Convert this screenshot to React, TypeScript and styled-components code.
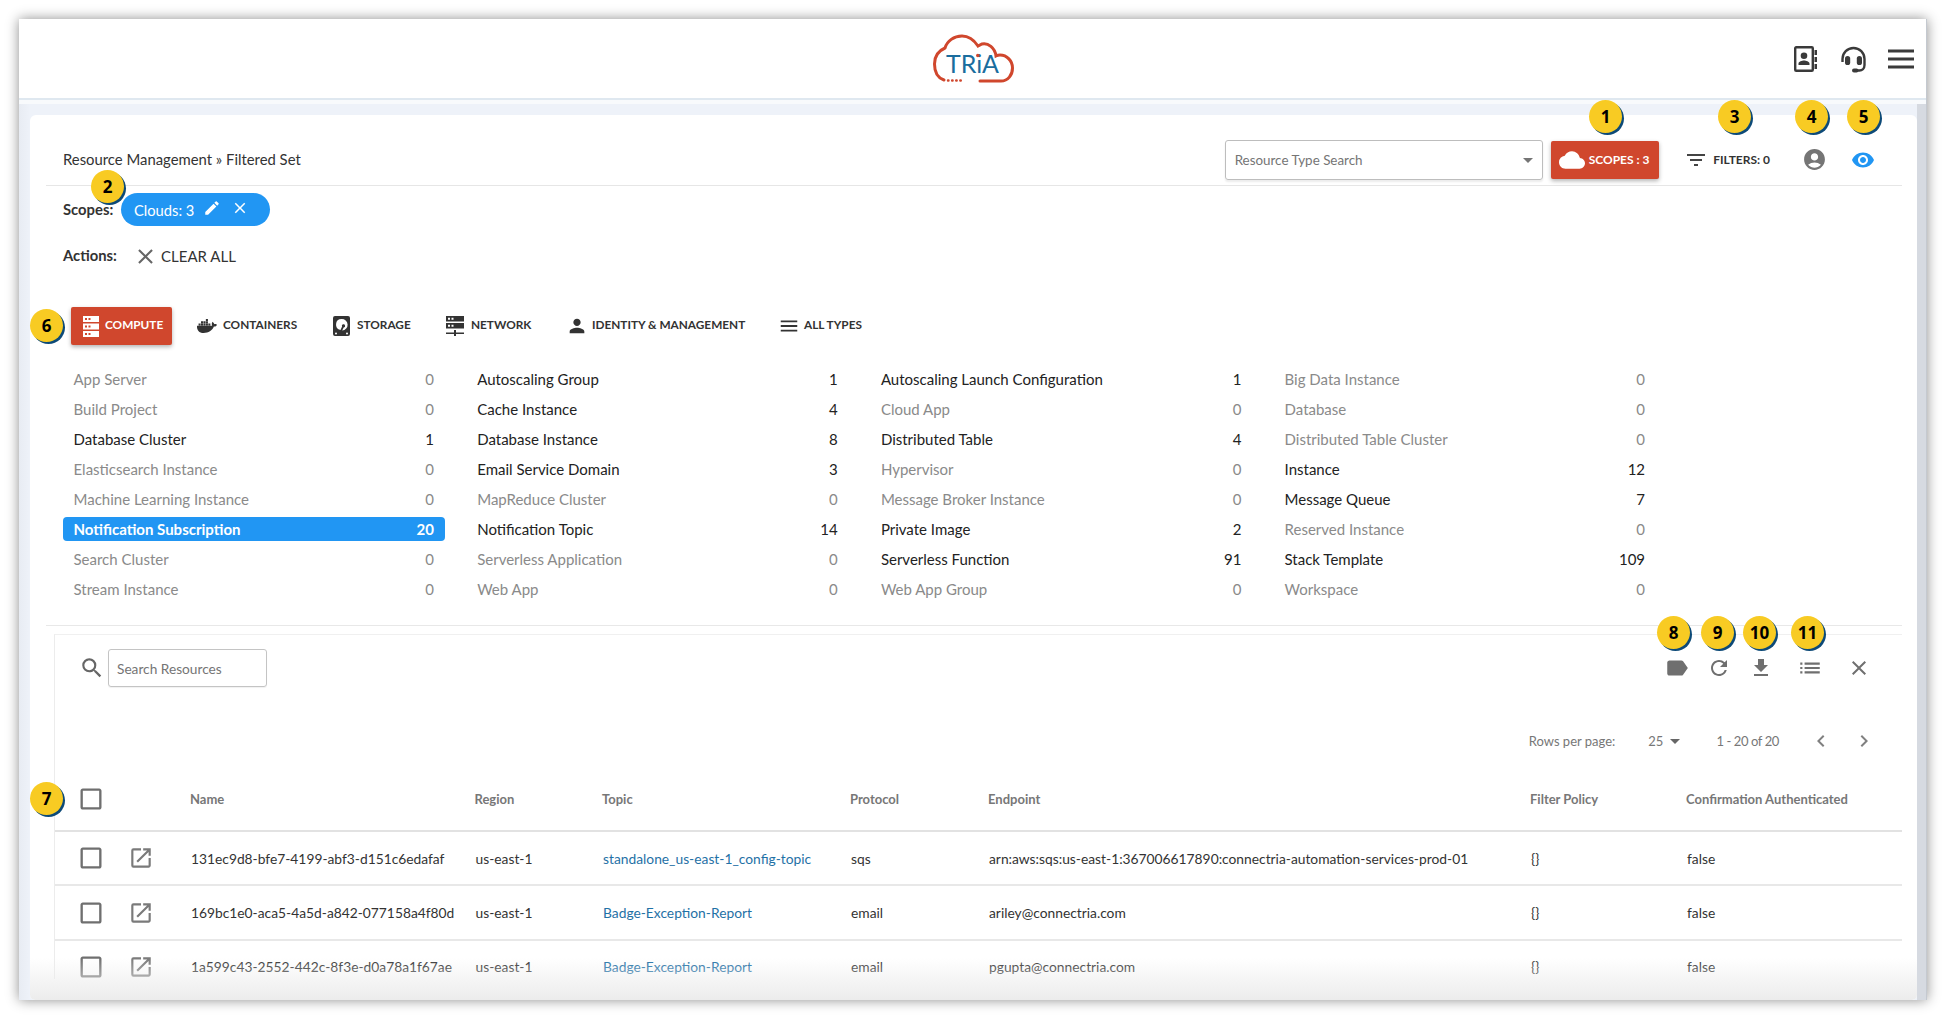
import React from "react";
import styled, { createGlobalStyle } from "styled-components";
import {
  MdEdit, MdClose, MdPerson, MdFilterList, MdAccountCircle, MdVisibility, MdCloud,
  MdLabel, MdRefresh, MdFileDownload, MdList, MdCheckBoxOutlineBlank, MdOpenInNew, MdSearch,
  MdChevronLeft, MdChevronRight, MdArrowDropDown, MdMenu,
} from "react-icons/md";
import { FaDocker } from "react-icons/fa";

const Global = createGlobalStyle`
  html, body { margin: 0; padding: 0; background: #fff; }
  body { font-family: Lato, "Liberation Sans", sans-serif; color: #333; }
  * { box-sizing: border-box; }
`;

const Page = styled.div`
  width: 1942px; height: 1029px; padding: 19px 15px 29px 19px; overflow: hidden; display: flex;
`;
const Window = styled.div`
  flex: 1; display: flex; flex-direction: column; background: #eef2f9;
  box-shadow: 0 0 12px rgba(0, 0, 0, 0.45); overflow: hidden;
  border-right: 1px solid #c4c9d0;
`;
const Header = styled.header`
  height: 85px; flex: none; padding: 0 2px 5px 0; background: linear-gradient(#fff 80px, #f8fafc 80px);
  position: relative; display: flex; align-items: center; justify-content: flex-end; gap: 0;
  &::after { content: ""; position: absolute; left: 0; right: 0; top: 79px; height: 2px; background: #dfe8f0; }
`;
const LogoSlot = styled.div`
  position: absolute; left: 914px; top: 15px; width: 82px; height: 50px;
`;
const HeaderIcon = styled.div<{ $w: number }>`
  width: ${(p) => p.$w}px; display: flex; justify-content: center; align-items: center; color: #3a3a3a;
`;
const Gutter = styled.div`
  flex: 1; display: flex; min-height: 0; padding: 11px 9px 0 11px;
  background: linear-gradient(90deg, #e8ecf3 0, #eef2f9 11px, #eef2f9 calc(100% - 9px), #d6dae1 calc(100% - 9px));
`;
const Card = styled.main`
  flex: 1; min-width: 0; background: #fff; border-radius: 6px 6px 5px 5px; position: relative;
  padding: 0 15px 21px 16px; display: flex; flex-direction: column; overflow: hidden;
  &::after {
    content: ""; position: absolute; left: 0; right: 0; bottom: 0; height: 42px; pointer-events: none;
    background: linear-gradient(rgba(240, 240, 240, 0), #ececec);
  }
`;
const TopBar = styled.div`
  height: 71px; flex: none; padding: 19px 27px 0 17px; border-bottom: 1px solid #e6e6e6;
  display: flex; align-items: center;
`;
const Crumb = styled.div`
  font-size: 14.85px; color: #333; flex: 1; padding-bottom: 2px;
`;
const TypeSelect = styled.div`
  width: 318px; height: 40px; border: 1.5px solid #bdbdbd; border-radius: 3px; padding: 0 2px 0 9px;
  display: flex; align-items: center; justify-content: space-between; font-size: 13.4px; color: #757575;
  box-shadow: 0 2px 2px rgba(0, 0, 0, 0.08);
`;
const ScopesButton = styled.button`
  margin-left: 8px; width: 108px; height: 38px; background: #d0472d; border: 0; border-radius: 2px; color: #fff;
  font: 700 12px Lato, sans-serif; display: flex; align-items: center; gap: 4px; padding: 0 0 0 8px;
  box-shadow: 0 2px 4px rgba(0, 0, 0, 0.3);
`;
const FiltersGroup = styled.div`
  margin-left: 25.5px; display: flex; align-items: center; gap: 5px; font: 700 12px Lato, sans-serif; color: #333;
`;
const PlainIcon = styled.div<{ $ml: number; $c: string }>`
  margin-left: ${(p) => p.$ml}px; color: ${(p) => p.$c}; display: flex;
`;
const InfoRow = styled.div<{ $mt: number }>`
  margin-top: ${(p) => p.$mt}px; padding-left: 17px; display: flex; align-items: center; height: 33px; flex: none;
`;
const InfoLabel = styled.span`
  font-size: 14.8px; font-weight: 700; color: #333; width: 58px; padding-bottom: 2px;
`;
const Chip = styled.div`
  width: 149px; height: 33px; border-radius: 17px; background: #2196f3; color: #fff; font-size: 14.7px;
  display: flex; align-items: center; padding-left: 13px;
`;
const ChipIcon = styled.span<{ $ml: number }>`
  margin-left: ${(p) => p.$ml}px; display: flex; position: relative; top: -2px;
`;
const ClearAll = styled.div`
  margin-left: 11.5px; display: flex; align-items: center; gap: 3.5px; font-size: 15px; color: #333;
`;
const Tabs = styled.nav`
  margin-top: 34.5px; padding-left: 25px; display: flex; align-items: center; height: 38px; flex: none;
`;
const Tab = styled.div<{ $active?: boolean; $w: number; $ml?: number; $gap: number }>`
  width: ${(p) => p.$w}px; height: 38px; flex: none; display: flex; align-items: center; gap: ${(p) => p.$gap}px;
  margin-left: ${(p) => p.$ml ?? 0}px;
  padding-left: ${(p) => (p.$active ? 11.5 : 0)}px; font-size: 11.8px; font-weight: 700;
  color: ${(p) => (p.$active ? "#fff" : "#333")};
  background: ${(p) => (p.$active ? "#d0472d" : "transparent")};
  border-radius: 2px; box-shadow: ${(p) => (p.$active ? "0 2px 4px rgba(0,0,0,.3)" : "none")};
  & > span { padding-bottom: 3px; }
`;
const TypeGrid = styled.section`
  margin-top: 22px; padding-left: 17px; display: grid; grid-template-columns: repeat(4, 382px);
  column-gap: 21.7px; row-gap: 6px; grid-auto-rows: 24px; flex: none;
`;
const TypeRow = styled.div<{ $on: boolean; $selected: boolean }>`
  display: flex; justify-content: space-between; align-items: center; padding: 0 11px 0 10.5px; font-size: 15px;
  border-radius: 4px; font-weight: ${(p) => (p.$selected ? 700 : 400)};
  color: ${(p) => (p.$selected ? "#fff" : p.$on ? "#222" : "#8a8a8a")};
  background: ${(p) => (p.$selected ? "#2196f3" : "transparent")};
`;
const Divider = styled.hr`
  margin: 24px 0 0; border: 0; border-top: 1px solid #e8e8e8; flex: none; width: 100%;
`;
const Panel = styled.section`
  margin: 8px 0 0 8px; flex: 1; min-height: 0; overflow: hidden; border-left: 1px solid #ececec; border-top: 1px solid #f0f0f0;
  display: flex; flex-direction: column;
`;
const Toolbar = styled.div`
  margin-top: 14px; height: 38px; flex: none; display: flex; align-items: center; padding: 0 19px 0 24px;
`;
const SearchIcon = styled.div`
  color: #666; display: flex; margin-right: 3px;
`;
const SearchBox = styled.div`
  width: 159px; height: 38px; border: 1px solid #c4c4c4; border-radius: 3px; font-size: 13.7px; color: #757575;
  display: flex; align-items: center; padding-left: 8px; box-shadow: 0 1px 1px rgba(0,0,0,.06);
`;
const ToolIcons = styled.div`
  margin-left: auto; display: flex; align-items: center; color: #6f6f6f;
`;
const ToolCell = styled.div<{ $w: number }>`
  width: ${(p) => p.$w}px; display: flex; justify-content: center;
`;
const Pager = styled.div`
  margin-top: 33px; height: 42px; flex: none; display: flex; align-items: center; justify-content: flex-end;
  padding-right: 26px; font-size: 13px; color: #777;
`;
const PagerPart = styled.span<{ $ml: number; $tight?: boolean }>`
  margin-left: ${(p) => p.$ml}px; display: flex; align-items: center;
  letter-spacing: ${(p) => (p.$tight ? "-0.4px" : "normal")};
`;
const COLS = "71px 64px 284.5px 127.5px 248px 138px 542px 156px 1fr";
const HeadRow = styled.div`
  height: 70px; flex: none; display: grid; grid-template-columns: ${COLS}; align-items: center;
  border-bottom: 2px solid #e2e2e2; font-size: 13px; font-weight: 700; color: #777; padding-top: 5px;
`;
const BodyRow = styled.div`
  height: 54.4px; flex: none; display: grid; grid-template-columns: ${COLS}; align-items: center;
  border-bottom: 2px solid #e8e8e8; font-size: 13.8px; color: #333;
`;
const Check = styled.div`
  color: #6f6f6f; display: flex; justify-content: center;
`;
const OpenIcon = styled.div`
  color: #7a7a7a; display: flex; padding-left: 2px;
`;
const Cell = styled.div`
  padding-left: 1px; white-space: nowrap;
`;
const LinkCell = styled(Cell)`
  color: #1f71a6;
`;
const Badge = styled.div<{ $x: number; $y: number }>`
  position: absolute; left: ${(p) => p.$x - 17}px; top: ${(p) => p.$y - 17}px; width: 33px; height: 33px; border-radius: 50%;
  background: #f8cb23; box-shadow: 2px 2px 0 #0d4a78; color: #000; font: 700 17px/33px "Open Sans", Lato, sans-serif;
  text-align: center; z-index: 5;
`;

const ServerStack = () => (
  <svg width="16" height="21" viewBox="0 0 16 21"><path fill="#fff" fillRule="evenodd" d="M0 0h16v6H0ZM2 2v2h2V2Zm3.500 0v2h2V2ZM0 7.500h16v6H0Zm2 2v2h2v-2Zm3.500 0v2h2v-2ZM0 15h16v6H0Zm2 2v2h2v-2Zm3.500 0v2h2v-2Z"/></svg>
);
const HardDisk = () => (
  <svg width="17" height="20" viewBox="0 0 17 20"><path fill="#333" fillRule="evenodd" d="M2 0h13a2 2 0 0 1 2 2v16a2 2 0 0 1-2 2H2a2 2 0 0 1-2-2V2a2 2 0 0 1 2-2Zm6.500 3a5.500 5.500 0 0 0-1 10.900l1.600-3.300a1.600 1.600 0 1 1 1.600.8l-1.500 3.100A5.500 5.500 0 0 0 8.500 3ZM3 16.500a1 1 0 1 0 0 2 1 1 0 0 0 0-2Zm11 0a1 1 0 1 0 0 2 1 1 0 0 0 0-2Z"/></svg>
);
const ServerNet = () => (
  <svg width="18" height="20" viewBox="0 0 18 20"><path fill="#333" fillRule="evenodd" d="M0 0h18v5.500H0ZM2 1.800v2h2v-2Zm3.500 0v2h2v-2ZM0 7h18v5.500H0Zm2 1.800v2h2v-2Zm3.500 0v2h2v-2ZM8 14h2v2.500h8V18h-8v2H8v-2H0v-1.500h8Z"/></svg>
);
const ContactBook = () => (
  <svg width="23" height="26" viewBox="0 0 23 26"><path fill="none" stroke="#3a3a3a" strokeWidth="2.400" d="M2.200 1.200h15.600a1 1 0 0 1 1 1v21.600a1 1 0 0 1-1 1H2.200a1 1 0 0 1-1-1V2.200a1 1 0 0 1 1-1Z"/><path fill="#3a3a3a" d="M20.500 4H23v5h-2.500Zm0 7H23v5h-2.500Zm0 7H23v5h-2.500ZM10 6.500a3.300 3.300 0 1 1 0 6.600 3.300 3.300 0 0 1 0-6.600ZM4.500 19v-1.600c0-2 3.600-3 5.500-3s5.500 1 5.500 3V19Z"/></svg>
);
const Headset = () => (
  <svg width="27" height="27" viewBox="0 0 27 27"><path fill="none" stroke="#3a3a3a" strokeWidth="2.400" d="M2.500 16V13a11 11 0 0 1 22 0v6c0 3.500-2.500 5.500-5 5.500H17"/><rect x="5" y="10" width="5.200" height="9" rx="2.600" fill="#3a3a3a"/><rect x="16.800" y="10" width="5.200" height="9" rx="2.600" fill="#3a3a3a"/><rect x="12" y="22.500" width="6.500" height="4" rx="2" fill="#3a3a3a"/></svg>
);
const Burger = () => (
  <svg width="26" height="20" viewBox="0 0 26 20"><path stroke="#3a3a3a" strokeWidth="2.800" d="M0 2h26M0 10h26M0 18h26"/></svg>
);
const Logo = () => (
  <svg width="82" height="50" viewBox="0 0 82 50">
    <path fill="none" stroke="#d0472d" strokeWidth="3" strokeLinecap="round" d="M47 47H68C75 47 79.500 41 79.500 34C79.500 27 74 21 67 21C65 21 64 21.500 63 22C62 14 55 8.500 49 10L45 12C41 6 36 2 29 2C21 2 14 7 12 14C5 17 1.500 23 1.500 30C1.500 38 5 44 11 46"/>
    <path stroke="#d0472d" strokeWidth="2.400" strokeLinecap="round" strokeDasharray="0.5 3.600" d="M15 46.500H29"/>
    <text x="13" y="39" fontFamily="Lato, sans-serif" fontSize="25.500" fill="#1a6d9e" textLength="53" lengthAdjust="spacingAndGlyphs">TRiA</text>
    <circle cx="44.800" cy="21.500" r="1.800" fill="#d0472d"/>
  </svg>
);

const TYPES: [string, number][] = [
  ["App Server", 0], ["Autoscaling Group", 1], ["Autoscaling Launch Configuration", 1], ["Big Data Instance", 0],
  ["Build Project", 0], ["Cache Instance", 4], ["Cloud App", 0], ["Database", 0],
  ["Database Cluster", 1], ["Database Instance", 8], ["Distributed Table", 4], ["Distributed Table Cluster", 0],
  ["Elasticsearch Instance", 0], ["Email Service Domain", 3], ["Hypervisor", 0], ["Instance", 12],
  ["Machine Learning Instance", 0], ["MapReduce Cluster", 0], ["Message Broker Instance", 0], ["Message Queue", 7],
  ["Notification Subscription", 20], ["Notification Topic", 14], ["Private Image", 2], ["Reserved Instance", 0],
  ["Search Cluster", 0], ["Serverless Application", 0], ["Serverless Function", 91], ["Stack Template", 109],
  ["Stream Instance", 0], ["Web App", 0], ["Web App Group", 0], ["Workspace", 0],
];
const ROWS = [
  ["131ec9d8-bfe7-4199-abf3-d151c6edafaf", "standalone_us-east-1_config-topic", "sqs", "arn:aws:sqs:us-east-1:367006617890:connectria-automation-services-prod-01"],
  ["169bc1e0-aca5-4a5d-a842-077158a4f80d", "Badge-Exception-Report", "email", "ariley@connectria.com"],
  ["1a599c43-2552-442c-8f3e-d0a78a1f67ae", "Badge-Exception-Report", "email", "pgupta@connectria.com"],
];
const BADGES: [string, number, number][] = [
  ["1", 1606, 117], ["2", 108, 187], ["3", 1735, 117], ["4", 1812, 117], ["5", 1864, 117], ["6", 47, 326],
  ["7", 47, 799], ["8", 1674, 633], ["9", 1718, 633], ["10", 1760, 633], ["11", 1808, 633],
];

export default function App() {
  return (
    <>
      <Global />
      <Page>
        <Window>
          <Header>
            <LogoSlot><Logo /></LogoSlot>
            <HeaderIcon $w={48}><ContactBook /></HeaderIcon>
            <HeaderIcon $w={49}><Headset /></HeaderIcon>
            <HeaderIcon $w={46}><Burger /></HeaderIcon>
          </Header>
          <Gutter>
            <Card>
              <TopBar>
                <Crumb>Resource Management » Filtered Set</Crumb>
                <TypeSelect>Resource Type Search<MdArrowDropDown size={24} color="#757575" /></TypeSelect>
                <ScopesButton><MdCloud size={26} />SCOPES : 3</ScopesButton>
                <FiltersGroup><MdFilterList size={24} color="#444" />FILTERS: 0</FiltersGroup>
                <PlainIcon $ml={32} $c="#757575"><MdAccountCircle size={25} /></PlainIcon>
                <PlainIcon $ml={24} $c="#2196f3"><MdVisibility size={24} /></PlainIcon>
              </TopBar>
              <InfoRow $mt={7}>
                <InfoLabel>Scopes:</InfoLabel>
                <Chip>Clouds: 3
                  <ChipIcon $ml={9}><MdEdit size={18} /></ChipIcon>
                  <ChipIcon $ml={10}><MdClose size={18} /></ChipIcon>
                </Chip>
              </InfoRow>
              <InfoRow $mt={13.5}>
                <InfoLabel>Actions:</InfoLabel>
                <ClearAll><MdClose size={25} color="#666" />CLEAR ALL</ClearAll>
              </InfoRow>
              <Tabs>
                <Tab $active $w={101} $gap={6.5}><ServerStack /><span>COMPUTE</span></Tab>
                <Tab $w={136} $ml={25} $gap={6}><FaDocker size={20} /><span>CONTAINERS</span></Tab>
                <Tab $w={113} $gap={7}><HardDisk /><span>STORAGE</span></Tab>
                <Tab $w={120} $gap={7}><ServerNet /><span>NETWORK</span></Tab>
                <Tab $w={212} $gap={4}><MdPerson size={22} /><span>IDENTITY &amp; MANAGEMENT</span></Tab>
                <Tab $w={90} $gap={4}><MdMenu size={22} /><span>ALL TYPES</span></Tab>
              </Tabs>
              <TypeGrid>
                {TYPES.map(([n, c]) => (
                  <TypeRow key={n} $on={c > 0} $selected={n === "Notification Subscription"}>
                    <span>{n}</span><span>{c}</span>
                  </TypeRow>
                ))}
              </TypeGrid>
              <Divider />
              <Panel>
                <Toolbar>
                  <SearchIcon><MdSearch size={26} /></SearchIcon>
                  <SearchBox>Search Resources</SearchBox>
                  <ToolIcons>
                    <ToolCell $w={49.6}><MdLabel size={26} /></ToolCell>
                    <ToolCell $w={34.9}><MdRefresh size={24} /></ToolCell>
                    <ToolCell $w={48.6}><MdFileDownload size={24} /></ToolCell>
                    <ToolCell $w={49.7}><MdList size={26} /></ToolCell>
                    <ToolCell $w={48}><MdClose size={24} /></ToolCell>
                  </ToolIcons>
                </Toolbar>
                <Pager>
                  <span>Rows per page:</span>
                  <PagerPart $ml={33}>25<MdArrowDropDown size={24} color="#666" /></PagerPart>
                  <PagerPart $ml={29} $tight>1 - 20 of 20</PagerPart>
                  <PagerPart $ml={30}><MdChevronLeft size={24} color="#808080" /></PagerPart>
                  <PagerPart $ml={19}><MdChevronRight size={24} color="#808080" /></PagerPart>
                </Pager>
                <HeadRow>
                  <Check><MdCheckBoxOutlineBlank size={28} /></Check>
                  <span />
                  <span>Name</span><span>Region</span><span>Topic</span><span>Protocol</span><span>Endpoint</span><span>Filter Policy</span><span>Confirmation Authenticated</span>
                </HeadRow>
                {ROWS.map((r) => (
                  <BodyRow key={r[0]}>
                    <Check><MdCheckBoxOutlineBlank size={28} /></Check>
                    <OpenIcon><MdOpenInNew size={26} /></OpenIcon>
                    <Cell>{r[0]}</Cell>
                    <Cell>us-east-1</Cell>
                    <LinkCell>{r[1]}</LinkCell>
                    <Cell>{r[2]}</Cell>
                    <Cell>{r[3]}</Cell>
                    <Cell>{"{}"}</Cell>
                    <Cell>false</Cell>
                  </BodyRow>
                ))}
              </Panel>
            </Card>
          </Gutter>
        </Window>
        {BADGES.map(([t, x, y]) => (
          <Badge key={t} $x={x} $y={y}>{t}</Badge>
        ))}
      </Page>
    </>
  );
}
